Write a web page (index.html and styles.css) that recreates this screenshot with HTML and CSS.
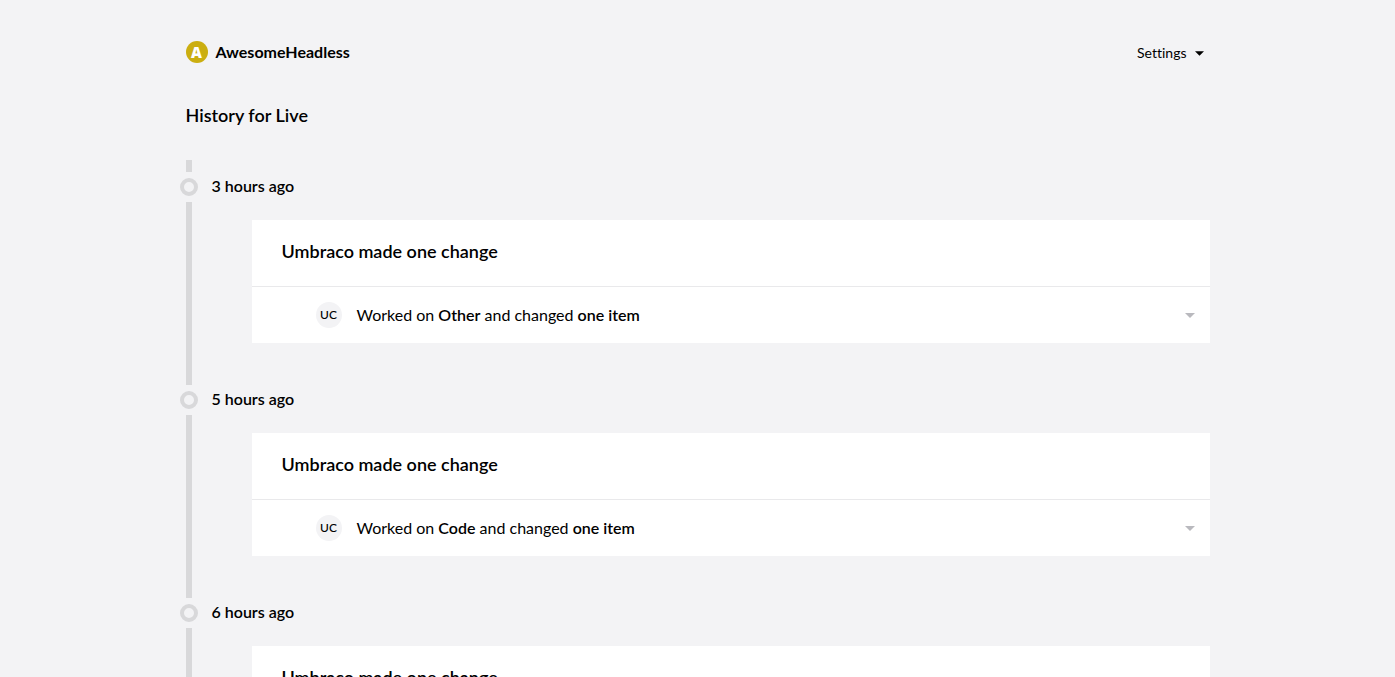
FILE: index.html
```html
<!DOCTYPE html>
<html lang="en">
<head>
<meta charset="utf-8">
<title>History for Live</title>
<meta name="viewport" content="width=device-width, initial-scale=1">
<link rel="stylesheet" href="styles.css">
</head>
<body>
<div class="page">
  <header class="topbar">
    <a class="project" href="#"><span class="project-badge">A</span>AwesomeHeadless</a>
    <button class="settings" type="button">Settings <svg class="caret" viewBox="0 0 10 5" aria-hidden="true"><path d="M0 0h10L5 5z"/></svg></button>
  </header>
  <main>
    <h1 class="title">History for Live</h1>
    <ol class="timeline">
      <li class="entry">
        <span class="dot"></span>
        <h2 class="time">3 hours ago</h2>
        <span class="line"></span>
        <article class="card">
          <h3 class="card-title">Umbraco made one change</h3>
          <button class="change" type="button">
            <span class="avatar">UC</span>
            <span class="summary">Worked on <strong>Other</strong> and changed <strong>one item</strong></span>
            <svg class="caret caret-muted" viewBox="0 0 10 5" aria-hidden="true"><path d="M0 0h10L5 5z"/></svg>
          </button>
        </article>
      </li>
      <li class="entry">
        <span class="dot"></span>
        <h2 class="time">5 hours ago</h2>
        <span class="line"></span>
        <article class="card">
          <h3 class="card-title">Umbraco made one change</h3>
          <button class="change" type="button">
            <span class="avatar">UC</span>
            <span class="summary">Worked on <strong>Code</strong> and changed <strong>one item</strong></span>
            <svg class="caret caret-muted" viewBox="0 0 10 5" aria-hidden="true"><path d="M0 0h10L5 5z"/></svg>
          </button>
        </article>
      </li>
      <li class="entry">
        <span class="dot"></span>
        <h2 class="time">6 hours ago</h2>
        <span class="line"></span>
        <article class="card">
          <h3 class="card-title">Umbraco made one change</h3>
        </article>
      </li>
    </ol>
  </main>
</div>
</body>
</html>
```
FILE: styles.css
```css
* {
  box-sizing: border-box;
}

body {
  margin: 0;
  height: 100vh;
  overflow: hidden;
  background: #f3f3f5;
  color: #000;
  font-family: Lato, sans-serif;
  font-size: 16px;
  line-height: 24px;
}

button {
  border: 0;
  background: none;
  color: inherit;
  font: inherit;
  cursor: pointer;
}

strong {
  font-weight: 600;
}

.page {
  max-width: 1024px;
  margin: 0 auto;
  padding-top: 40px;
}

.topbar {
  display: flex;
  align-items: flex-start;
  justify-content: space-between;
  height: 24px;
}

.project {
  display: flex;
  align-items: center;
  gap: 8px;
  color: inherit;
  font-weight: 700;
  text-decoration: none;
}

.project-badge {
  width: 22px;
  height: 22px;
  border-radius: 50%;
  background: #cbae10;
  color: #fff;
  font-family: "Open Sans", sans-serif;
  font-weight: 800;
  font-size: 15px;
  line-height: 22px;
  text-align: center;
}

.settings {
  display: flex;
  align-items: center;
  gap: 8px;
  padding: 1px 6px 0;
  font-size: 14px;
  font-variant-ligatures: none;
}

.caret {
  width: 9px;
  height: 5px;
  fill: #000;
}

.caret-muted {
  width: 10px;
  margin-left: auto;
  fill: #b9b9be;
}

.title {
  margin: 39px 0 33px;
  font-size: 18px;
  font-weight: 600;
}

.timeline {
  margin: 0 0 0 -6px;
  padding: 0;
  list-style: none;
}

.timeline::before {
  content: "";
  display: block;
  width: 6px;
  height: 12px;
  margin-left: 6px;
  background: #d8d8da;
}

.entry {
  display: grid;
  grid-template-columns: 18px 1fr;
  grid-template-rows: 30px auto;
  align-items: center;
}

.dot {
  width: 18px;
  height: 18px;
  border: 4px solid #d8d8da;
  border-radius: 50%;
}

.time {
  margin: 0 0 2px 14px;
  font-size: 16px;
  font-weight: 600;
}

.line {
  align-self: stretch;
  justify-self: center;
  width: 6px;
  background: #d8d8da;
}

.card {
  margin: 18px 0 42px 54px;
  background: #fff;
}

.card-title {
  margin: 0;
  padding: 19px 30px 23px;
  border-bottom: 1px solid #e9e9eb;
  font-size: 18px;
  font-weight: 600;
}

.change {
  display: flex;
  align-items: center;
  width: 100%;
  height: 56px;
  padding: 0 15px 0 64px;
  text-align: left;
}

.avatar {
  width: 26px;
  height: 26px;
  margin-right: 15px;
  border-radius: 50%;
  background: #f3f3f5;
  font-size: 12px;
  font-weight: 500;
  line-height: 26px;
  text-align: center;
}
```
